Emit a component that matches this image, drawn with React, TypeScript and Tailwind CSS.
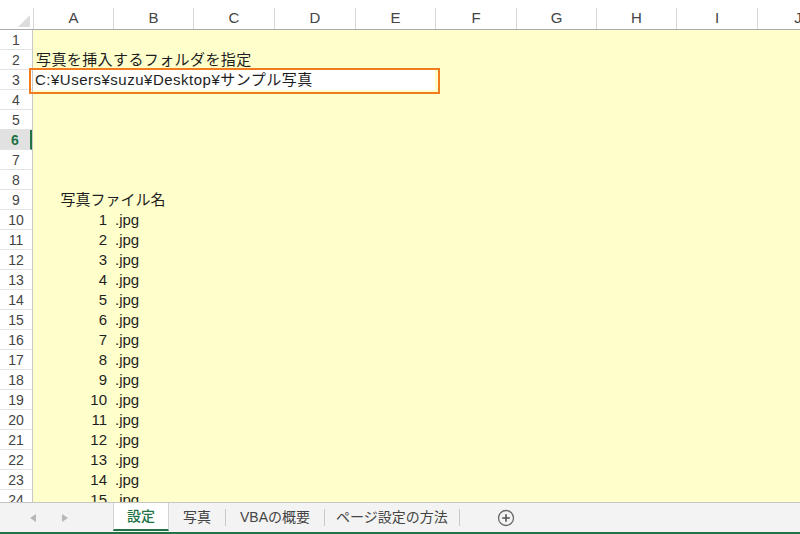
const cols = [
  { label: "A", w: "w-[80px]" },
  { label: "B", w: "w-[80px]" },
  { label: "C", w: "w-[81px]" },
  { label: "D", w: "w-[81px]" },
  { label: "E", w: "w-[80px]" },
  { label: "F", w: "w-[81px]" },
  { label: "G", w: "w-[80px]" },
  { label: "H", w: "w-[80px]" },
  { label: "I", w: "w-[81px]" },
  { label: "J", w: "w-[81px]" },
];

const rows = Array.from({ length: 24 }, (_, i) => i + 1);
const font = { fontFamily: '"Liberation Sans", "Noto Sans CJK JP", sans-serif' };

function RowHeader({ n }: { n: number }) {
  if (n === 6) {
    return (
      <div className="h-[20px] shrink-0 border-b border-[#e3e3e3] border-r-2 border-r-[#217346] bg-[#e1e1e1] text-center text-[14px] font-bold leading-[20px] text-[#217346]">
        {n}
      </div>
    );
  }
  return (
    <div className="h-[20px] shrink-0 border-b border-[#e3e3e3] text-center text-[14px] leading-[20px] text-[#444]">
      {n}
    </div>
  );
}

function Cells({ n }: { n: number }) {
  if (n === 2) {
    return <div className="pl-[3px] tracking-[0.4px] whitespace-nowrap">写真を挿入するフォルダを指定</div>;
  }
  if (n === 3) {
    return (
      <div className="w-[402px] bg-white pl-[2px] tracking-[0.5px] whitespace-nowrap">
        C:¥Users¥suzu¥Desktop¥サンプル写真
      </div>
    );
  }
  if (n === 9) {
    return <div className="w-[160px] text-center whitespace-nowrap">写真ファイル名</div>;
  }
  if (n >= 10) {
    return (
      <>
        <div className="w-[80px] pr-[6px] text-right">{n - 9}</div>
        <div className="pl-[2px]">.jpg</div>
      </>
    );
  }
  return null;
}

export default function App() {
  return (
    <div className="flex h-[534px] w-[800px] flex-col overflow-hidden bg-white" style={font}>
      {/* column headers */}
      <div className="flex h-[30px] shrink-0 border-b border-[#ababab] bg-white">
        <div className="flex w-[33px] shrink-0 items-end justify-end pb-[2px] pr-[3px]">
          <svg width="12" height="12" viewBox="0 0 12 12">
            <polygon points="12,0 12,12 0,12" fill="#dcdcdc" />
          </svg>
        </div>
        {cols.map((c) => (
          <div key={c.label} className={`${c.w} shrink-0 pt-[8px]`}>
            <div className="flex h-full items-center justify-center border-l border-[#d6d6d6] text-[15px] text-[#444]">
              {c.label}
            </div>
          </div>
        ))}
      </div>

      {/* body */}
      <div className="relative flex min-h-0 flex-1">
        <div className="flex w-[33px] shrink-0 flex-col overflow-hidden border-r border-[#c8c8c8] bg-white">
          {rows.map((n) => (
            <RowHeader key={n} n={n} />
          ))}
        </div>
        <div className="flex flex-1 flex-col overflow-hidden bg-[#ffffcc] text-[15px] text-[#1e1e1e]">
          {rows.map((n) => (
            <div key={n} className="flex h-[20px] shrink-0 items-center leading-[20px]">
              <Cells n={n} />
            </div>
          ))}
        </div>
        <div className="pointer-events-none absolute left-[29px] top-[38px] h-[26px] w-[411px] border-2 border-[#f07c1e]" />
      </div>

      {/* sheet tabs */}
      <div className="flex h-[32px] shrink-0 items-stretch border-t border-[#c6c6c6] border-b-2 border-b-[#217346] bg-[#f3f3f3] text-[14px] text-[#444]">
        <div className="flex w-[113px] shrink-0 items-center">
          <svg className="ml-[30px]" width="6" height="8" viewBox="0 0 6 8">
            <polygon points="6,0 6,8 0,4" fill="#b8b8b8" />
          </svg>
          <svg className="ml-[26px]" width="6" height="8" viewBox="0 0 6 8">
            <polygon points="0,0 0,8 6,4" fill="#b8b8b8" />
          </svg>
        </div>
        <div className="mb-[1px] flex w-[56px] shrink-0 items-center justify-center border-x border-[#d4d4d4] border-b-2 border-b-[#217346] bg-white font-medium text-[#217346]">
          設定
        </div>
        <div className="flex items-center px-[14px]">写真</div>
        <div className="my-[6px] w-px bg-[#c8c8c8]" />
        <div className="flex items-center px-[14px]">VBAの概要</div>
        <div className="my-[6px] w-px bg-[#c8c8c8]" />
        <div className="flex items-center px-[11px]">ページ設定の方法</div>
        <div className="my-[6px] w-px bg-[#c8c8c8]" />
        <div className="flex items-center pl-[37px]">
          <svg width="18" height="18" viewBox="0 0 18 18">
            <circle cx="9" cy="9" r="7.5" fill="none" stroke="#6a6a6a" strokeWidth="1.3" />
            <path d="M9 5.2v7.6M5.2 9h7.6" stroke="#555" strokeWidth="1.6" />
          </svg>
        </div>
      </div>
    </div>
  );
}
